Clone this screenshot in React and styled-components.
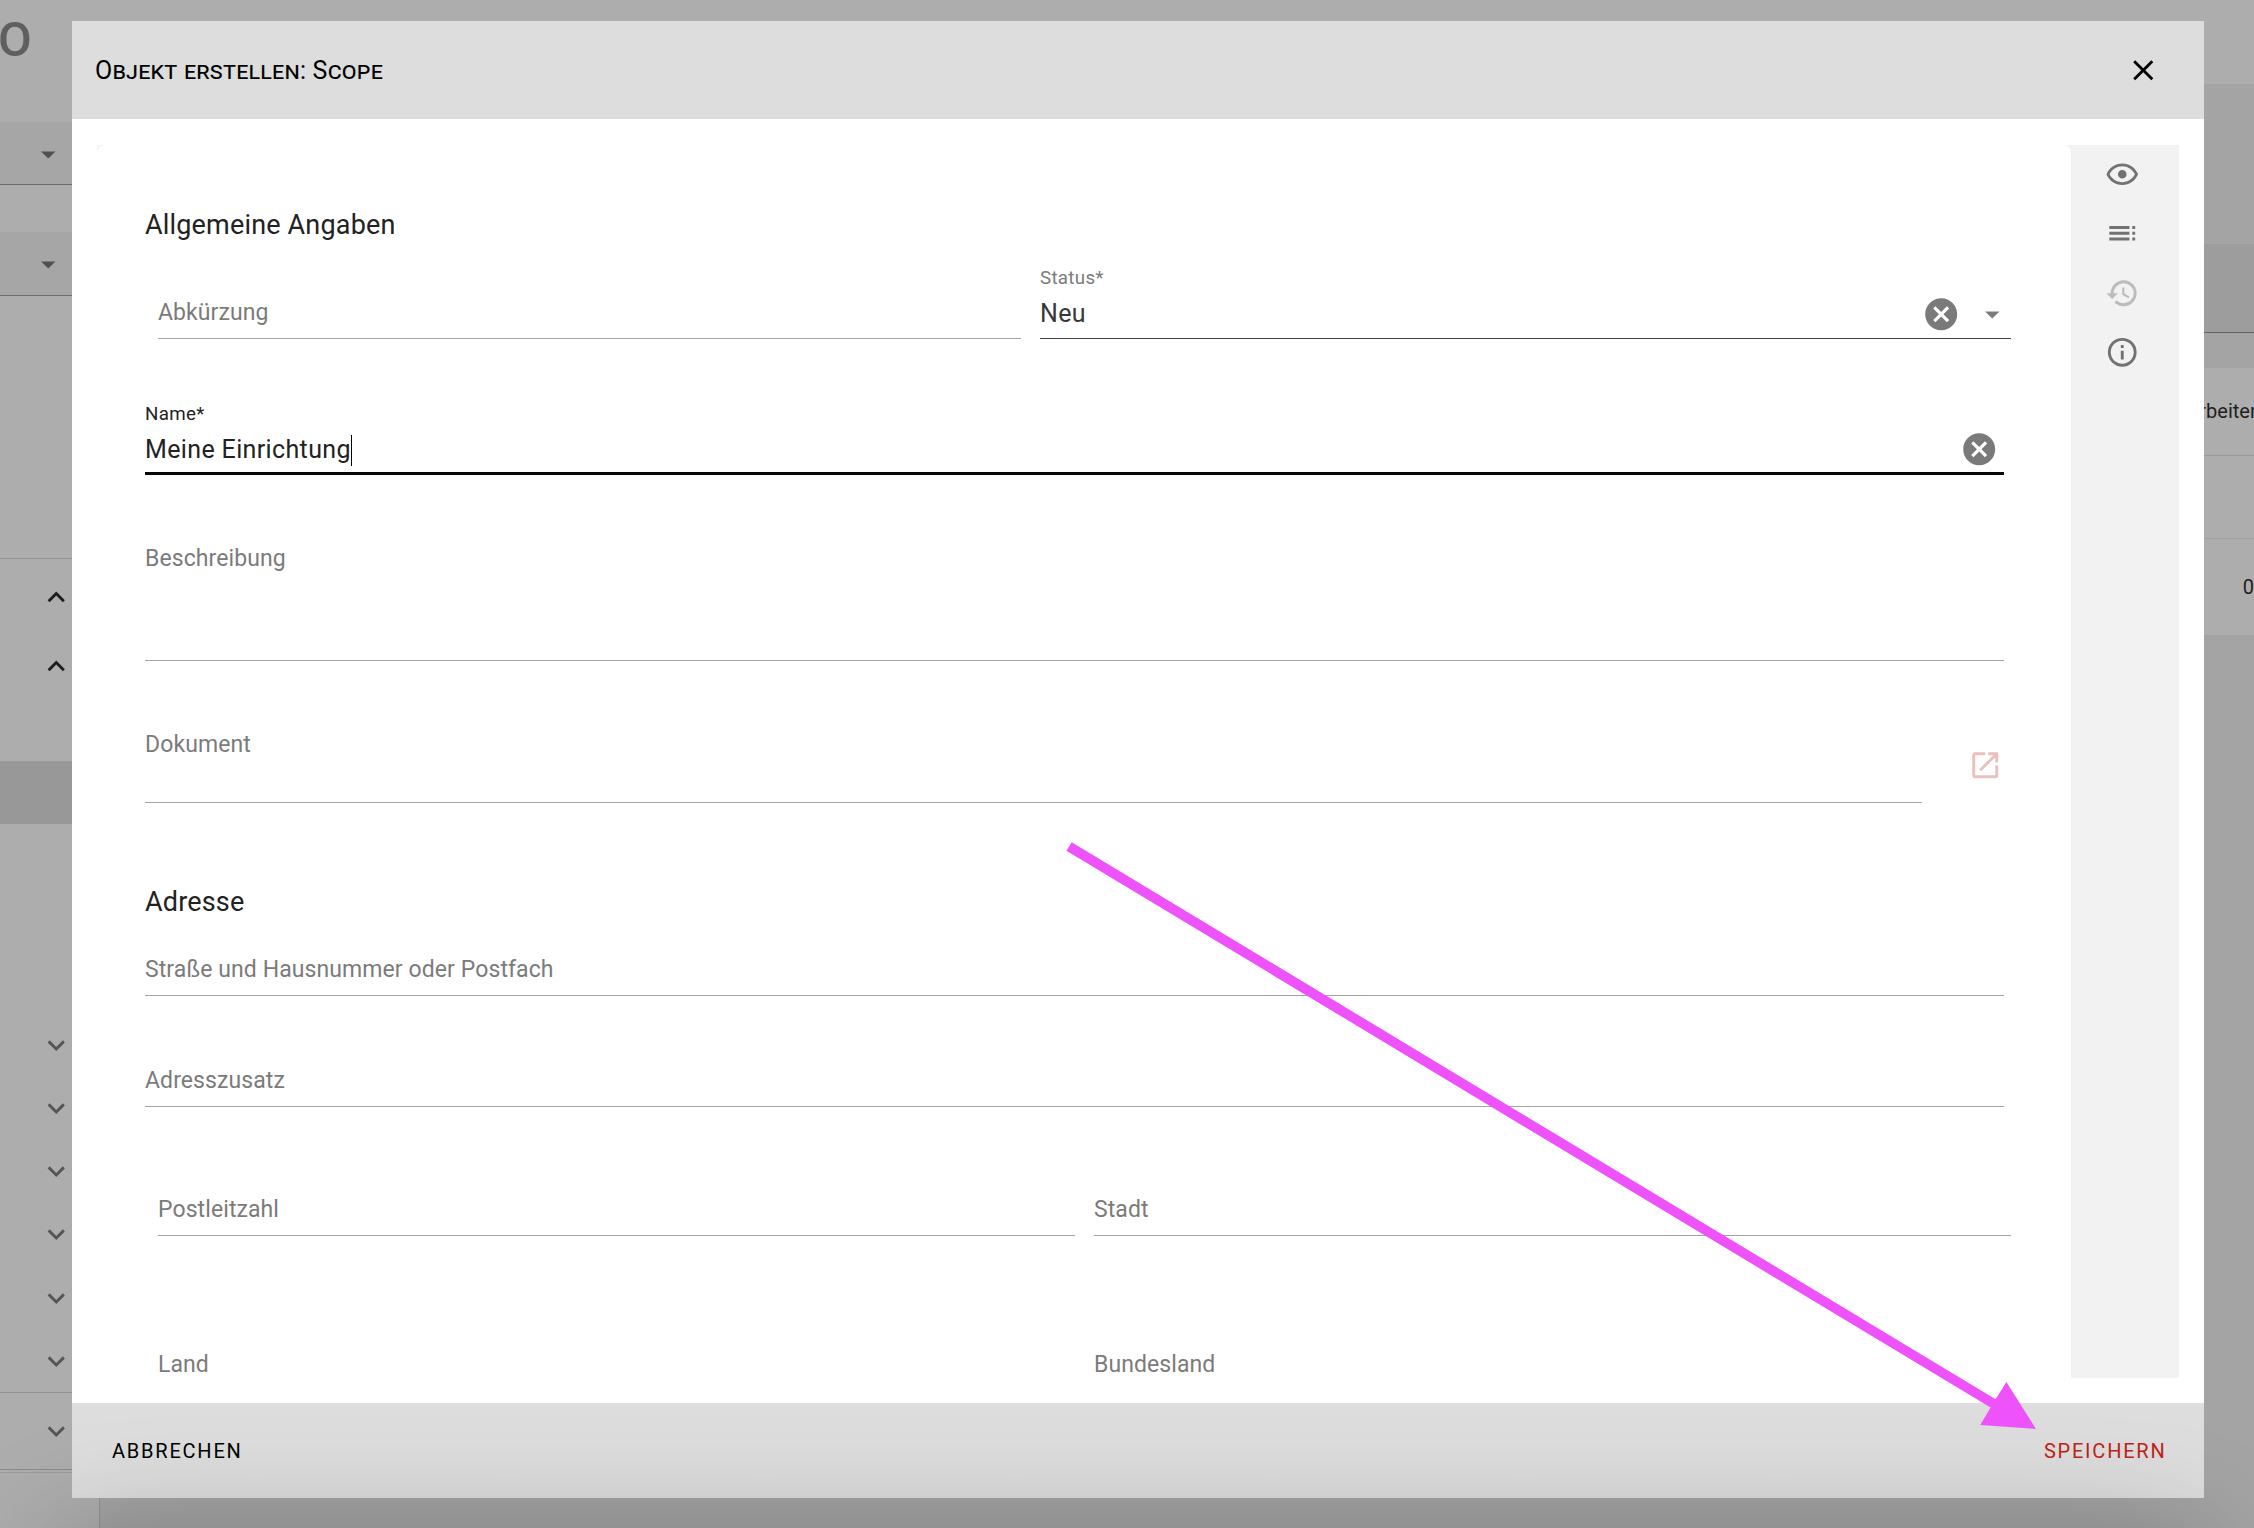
import React from 'react';
import styled, { createGlobalStyle } from 'styled-components';

const GlobalStyle = createGlobalStyle`
  *, *::before, *::after { box-sizing: border-box; }
  body {
    margin: 0;
    overflow: hidden;
    font-family: Roboto, "Liberation Sans", sans-serif;
    background: #a4a4a4;
  }
`;

const Screen = styled.div`
  position: relative;
  width: 2254px;
  height: 1528px;
  overflow: hidden;
`;

/* ---------- dimmed page behind the dialog ---------- */

const Page = styled.div`
  display: flex;
  flex-direction: column;
  height: 100%;
  background: #a4a4a4;
`;

const TopBar = styled.header`
  flex: none;
  height: 84px;
  padding-top: 11px;
  background: #adadad;
`;

const Brand = styled.div`
  margin-left: -2px;
  font-size: 49px;
  font-weight: 500;
  line-height: 58px;
  color: #5f5f5f;
`;

const Columns = styled.div`
  flex: 1;
  display: flex;
  min-height: 0;
`;

const Sidebar = styled.aside`
  display: flex;
  flex-direction: column;
  flex: none;
  width: 100px;
  padding-top: 38px;
  background: #adadad;
  border-right: 1px solid #929292;
`;

const SelectStub = styled.div`
  display: flex;
  align-items: center;
  flex: none;
  height: ${(p) => p.$height}px;
  margin-bottom: ${(p) => p.$after}px;
  padding: 2px 0 0 31px;
  background: #a6a6a6;
  border-bottom: 1px solid #6e6e6e;
  color: #505050;
`;

const Rule = styled.div`
  flex: none;
  height: 1px;
  background: ${(p) => p.$color || '#929292'};
`;

const Group = styled.div`
  display: flex;
  flex-direction: column;
  flex: none;
  height: ${(p) => p.$height}px;
  padding-top: ${(p) => p.$top || 0}px;
`;

const TreeRow = styled.div`
  display: flex;
  align-items: center;
  flex: none;
  height: ${(p) => p.$height || 63.2}px;
  padding: 1px 0 0 38.8px;
  color: ${(p) => (p.$open ? '#1c1c1c' : '#555')};
  background: ${(p) => (p.$active ? '#989898' : 'transparent')};
`;

const Content = styled.main`
  display: flex;
  flex-direction: column;
  flex: 1;
`;

const FilterBar = styled.div`
  display: flex;
  flex-direction: column;
  height: 284px;
  padding: 160px 0 35px;
`;

const FilterField = styled.div`
  flex: 1;
  background: #9d9d9d;
  border-bottom: 1px solid #636363;
`;

const TableRow = styled.div`
  display: flex;
  align-items: center;
  justify-content: flex-end;
  height: ${(p) => p.$height}px;
  background: #adadad;
  border-bottom: ${(p) => (p.$line ? `1px solid ${p.$line}` : 'none')};
  font-size: 20px;
  color: #1f1f1f;
  white-space: nowrap;
`;

const Cell = styled.span`
  margin: -1px ${(p) => p.$shift}px 0 0;
`;

/* ---------- dialog ---------- */

const Dialog = styled.section`
  position: absolute;
  top: 21px;
  left: 72px;
  display: flex;
  flex-direction: column;
  width: 2132px;
  height: 1477px;
  background: #fff;
`;

const DialogHeader = styled.header`
  display: flex;
  align-items: center;
  justify-content: space-between;
  height: 98px;
  padding: 0 44px 0 23px;
  background: #dddddd;
`;

const Title = styled.h1`
  margin: 0;
  font-size: 25px;
  font-weight: 400;
  font-variant: small-caps;
  letter-spacing: 0.2px;
  color: #000;
`;

const DialogBody = styled.div`
  flex: 1;
  min-height: 0;
  display: flex;
  padding: 26px 25px 25px;
`;

const Panel = styled.div`
  flex: 1;
  min-width: 0;
  display: flex;
  background: linear-gradient(#f2f2f2, #f2f2f2) 0 0 / 100% 16px no-repeat;
`;

const Form = styled.form`
  flex: 1;
  display: flex;
  flex-direction: column;
  padding: 64px 67px 0 48px;
  overflow: hidden;
  background: #fff;
  border-radius: 8px 8px 0 0;
`;

const SideTools = styled.nav`
  flex: none;
  display: flex;
  flex-direction: column;
  align-items: center;
  gap: 24.8px;
  width: 108px;
  padding: 12px 6px 0 0;
  background: #f2f2f2;
`;

const DialogFooter = styled.footer`
  display: flex;
  align-items: center;
  justify-content: space-between;
  height: 95px;
  padding: 1px 37.5px 0 40px;
  background: #dddddd;
`;

const TextButton = styled.button`
  padding: 0;
  border: 0;
  background: none;
  font: 400 20px/28px Roboto, "Liberation Sans", sans-serif;
  letter-spacing: 1.78px;
  text-transform: uppercase;
  color: ${(p) => (p.$accent ? '#bf2317' : '#000')};
`;

const IconButton = styled.button`
  display: flex;
  padding: 0;
  border: 0;
  background: none;
  color: ${(p) => p.$color || '#727272'};
  margin-top: ${(p) => p.$top || 0}px;
`;

/* ---------- form parts ---------- */

const SectionTitle = styled.h2`
  flex: none;
  margin: ${(p) => p.$gap || 0}px 0 0;
  font-size: 27px;
  font-weight: 400;
  line-height: 32px;
  letter-spacing: 0.17px;
  color: #222;
`;

const Row = styled.div`
  flex: none;
  display: flex;
  gap: 19px;
  align-items: flex-end;
  margin: ${(p) => p.$gap}px -7px 0 13px;
`;

const DocumentRow = styled.div`
  flex: none;
  display: flex;
  justify-content: space-between;
  margin-top: 69px;
  padding-right: 2px;
`;

const FieldBox = styled.div`
  flex: ${(p) => (p.$width ? 'none' : p.$grow ? '1 1 0' : 'none')};
  width: ${(p) => (p.$width ? `${p.$width}px` : 'auto')};
  height: ${(p) => p.$height}px;
  margin-top: ${(p) => p.$gap || 0}px;
  display: flex;
  flex-direction: column;
  justify-content: space-between;
  border-bottom: ${(p) =>
    p.$focused ? '3px solid #080808' : `1px solid ${p.$filled ? '#424242' : '#a3a3a3'}`};
  padding-top: 1px;
  padding-bottom: ${(p) => (p.$focused ? 8 : p.$filled ? 10 : 0)}px;
`;

const Placeholder = styled.label`
  font-size: 23px;
  line-height: 28px;
  letter-spacing: 0.09px;
  color: #7b7b7b;
`;

const FloatingLabel = styled.label`
  font-size: 18.75px;
  line-height: 22px;
  letter-spacing: 0.3px;
  color: ${(p) => (p.$focused ? '#222' : '#7b7b7b')};
`;

const ValueLine = styled.div`
  display: flex;
  align-items: center;
  gap: 14px;
  height: 28px;
  padding-right: ${(p) => p.$end}px;
  font-size: 25px;
  line-height: 28px;
  letter-spacing: 0.36px;
  color: ${(p) => p.$color || '#222'};

  svg {
    flex: none;
    margin-top: ${(p) => p.$lift || 0}px;
    color: #7a7a7a;
  }
`;

const Value = styled.span`
  flex: 1;
  display: flex;
  align-items: center;
`;

const Caret = styled.span`
  width: 1px;
  height: 31px;
  background: #000;
`;

/* ---------- overlays ---------- */

const DockShade = styled.div`
  position: absolute;
  left: 50px;
  top: 1550px;
  width: 2154px;
  height: 200px;
  border-radius: 40px;
  box-shadow: 0 0 120px rgba(0, 0, 0, 0.34);
`;

const Pointer = styled.svg`
  position: absolute;
  left: 0;
  top: 0;
  pointer-events: none;
`;

/* ---------- icons ---------- */

const PATHS = {
  close: 'M19,6.41L17.59,5L12,10.59L6.41,5L5,6.41L10.59,12L5,17.59L6.41,19L12,13.41L17.59,19L19,17.59L13.41,12L19,6.41Z',
  clear: 'M12,2C17.53,2 22,6.47 22,12C22,17.53 17.53,22 12,22C6.47,22 2,17.53 2,12C2,6.47 6.47,2 12,2M15.59,7L12,10.59L8.41,7L7,8.41L10.59,12L7,15.59L8.41,17L12,13.41L15.59,17L17,15.59L13.41,12L17,8.41L15.59,7Z',
  menuDown: 'M7,10L12,15L17,10H7Z',
  down: 'M7.41,8.58L12,13.17L16.59,8.58L18,10L12,16L6,10L7.41,8.58Z',
  up: 'M7.41,15.41L12,10.83L16.59,15.41L18,14L12,8L6,14L7.41,15.41Z',
  eye: 'M12,9A3,3 0 0,1 15,12A3,3 0 0,1 12,15A3,3 0 0,1 9,12A3,3 0 0,1 12,9M12,4.5C17,4.5 21.27,7.61 23,12C21.27,16.39 17,19.5 12,19.5C7,19.5 2.73,16.39 1,12C2.73,7.61 7,4.5 12,4.5M3.18,12C4.83,15.36 8.24,17.5 12,17.5C15.76,17.5 19.17,15.36 20.82,12C19.17,8.64 15.76,6.5 12,6.5C8.24,6.5 4.83,8.64 3.18,12Z',
  toc: 'M3,9H17V7H3V9M3,13H17V11H3V13M3,17H17V15H3V17M19,17H21V15H19V17M19,7V9H21V7H19M19,13H21V11H19V13Z',
  history: 'M13.5,8H12V13L16.28,15.54L17,14.33L13.5,12.25V8M13,3A9,9 0 0,0 4,12H1L4.96,16.03L9,12H6A7,7 0 0,1 13,5A7,7 0 0,1 20,12A7,7 0 0,1 13,19C11.07,19 9.32,18.21 8.06,16.94L6.64,18.36C8.27,20 10.5,21 13,21A9,9 0 0,0 22,12A9,9 0 0,0 13,3',
  info: 'M11,9H13V7H11M12,20C7.59,20 4,16.41 4,12C4,7.59 7.59,4 12,4C16.41,4 20,7.59 20,12C20,16.41 16.41,20 12,20M12,2A10,10 0 0,0 2,12A10,10 0 0,0 12,22A10,10 0 0,0 22,12A10,10 0 0,0 12,2M11,17H13V11H11V17Z',
  open: 'M14,3V5H17.59L7.76,14.83L9.17,16.24L19,6.41V10H21V3M19,19H5V5H12V3H5C3.89,3 3,3.9 3,5V19A2,2 0 0,0 5,21H19A2,2 0 0,0 21,19V12H19V19Z',
};

const Icon = ({ name, size = 34.5 }) => (
  <svg width={size} height={size} viewBox="0 0 24 24" fill="currentColor" aria-hidden="true">
    <path d={PATHS[name]} />
  </svg>
);

const EmptyField = ({ label, height = 41, gap, width, grow }) => (
  <FieldBox $height={height} $gap={gap} $width={width} $grow={grow}>
    <Placeholder>{label}</Placeholder>
  </FieldBox>
);

export default function App() {
  return (
    <Screen>
      <GlobalStyle />
      <Page>
        <TopBar>
          <Brand>O</Brand>
        </TopBar>
        <Columns>
          <Sidebar>
            <SelectStub $height={63} $after={47}><Icon name="menuDown" /></SelectStub>
            <SelectStub $height={64} $after={262}><Icon name="menuDown" /></SelectStub>
            <Rule />
            <Group $height={202} $top={3}>
              <TreeRow $height={69} $open><Icon name="up" /></TreeRow>
              <TreeRow $height={69} $open><Icon name="up" /></TreeRow>
            </Group>
            <TreeRow $height={63} $active />
            <Group $height={568} $top={189}>
              {[1, 2, 3, 4, 5, 6].map((n) => (
                <TreeRow key={n}><Icon name="down" /></TreeRow>
              ))}
            </Group>
            <Rule />
            <TreeRow $height={76}><Icon name="down" /></TreeRow>
            <Rule $color="#8c8c8c" />
            <Group $height={2} />
            <Rule $color="#9c9c9c" />
          </Sidebar>
          <Content>
            <FilterBar><FilterField /></FilterBar>
            <TableRow $height={88} $line="#999"><Cell $shift={-7}>bearbeiten</Cell></TableRow>
            <TableRow $height={83} $line="#a0a0a0" />
            <TableRow $height={96}><Cell $shift={0}>0</Cell></TableRow>
          </Content>
        </Columns>
      </Page>

      <Dialog>
        <DialogHeader>
          <Title>Objekt erstellen: Scope</Title>
          <IconButton $color="#000"><Icon name="close" /></IconButton>
        </DialogHeader>

        <DialogBody>
          <Panel>
            <Form>
              <SectionTitle>Allgemeine Angaben</SectionTitle>
              <Row $gap={25}>
                <EmptyField label="Abkürzung" width={863} />
                <FieldBox $height={73} $grow $filled>
                  <FloatingLabel>Status*</FloatingLabel>
                  <ValueLine $end={2} $color="#383838">
                    <Value>Neu</Value>
                    <Icon name="clear" size={38.4} />
                    <Icon name="menuDown" />
                  </ValueLine>
                </FieldBox>
              </Row>
              <FieldBox $height={73} $gap={63} $focused>
                <FloatingLabel $focused>Name*</FloatingLabel>
                <ValueLine $end={6} $lift={-2}>
                  <Value>Meine Einrichtung<Caret /></Value>
                  <Icon name="clear" size={38.4} />
                </ValueLine>
              </FieldBox>
              <EmptyField label="Beschreibung" height={117} gap={69} />
              <DocumentRow>
                <EmptyField label="Dokument" height={73} width={1777} />
                <IconButton type="button" $color="#eabfbc" $top={18}><Icon name="open" /></IconButton>
              </DocumentRow>

              <SectionTitle $gap={83}>Adresse</SectionTitle>
              <EmptyField label="Straße und Hausnummer oder Postfach" gap={37} />
              <EmptyField label="Adresszusatz" gap={70} />
              <Row $gap={88}>
                <EmptyField label="Postleitzahl" grow />
                <EmptyField label="Stadt" grow />
              </Row>
              <Row $gap={114}>
                <EmptyField label="Land" grow />
                <EmptyField label="Bundesland" grow />
              </Row>
            </Form>
          </Panel>
          <SideTools>
            <IconButton><Icon name="eye" /></IconButton>
            <IconButton><Icon name="toc" /></IconButton>
            <IconButton $color="#bcbcbc"><Icon name="history" /></IconButton>
            <IconButton><Icon name="info" /></IconButton>
          </SideTools>
        </DialogBody>

        <DialogFooter>
          <TextButton>Abbrechen</TextButton>
          <TextButton $accent>Speichern</TextButton>
        </DialogFooter>
      </Dialog>

      <DockShade />
      <Pointer width="2254" height="1528" viewBox="0 0 2254 1528">
        <path
          d="M1071.7 842.3L1995.6 1399.2L2006.4 1382L2036 1429L1980.2 1425L1990.6 1407.6L1066.4 850.7Z"
          fill="#ee52fa"
        />
      </Pointer>
    </Screen>
  );
}
